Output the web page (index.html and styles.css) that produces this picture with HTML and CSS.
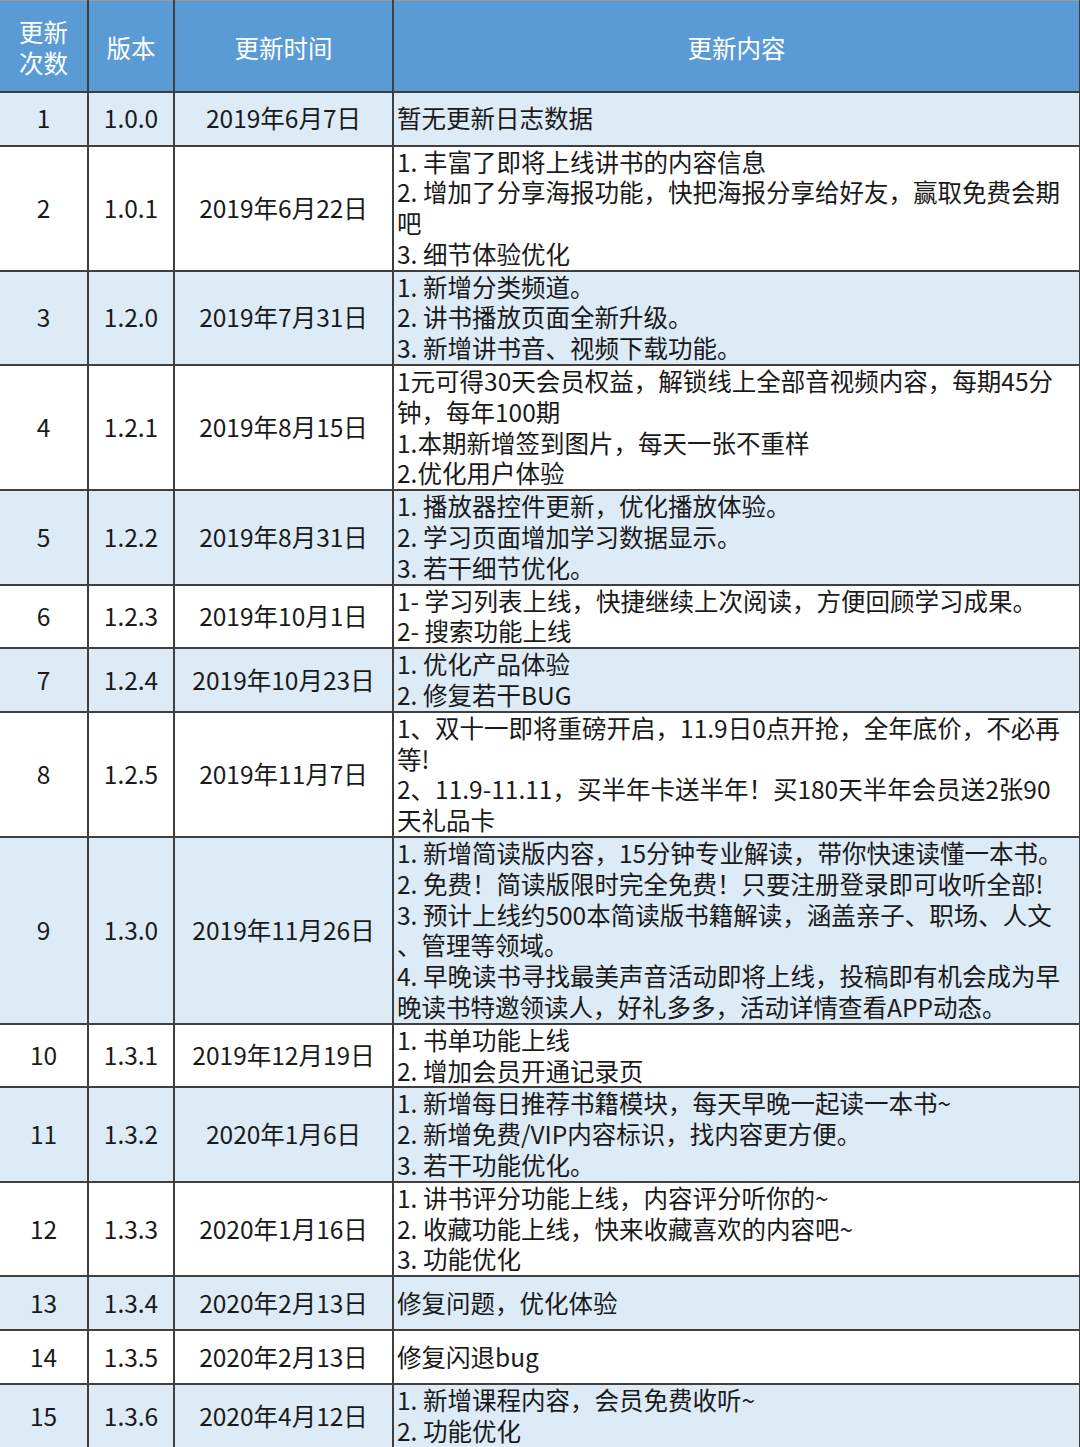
FILE: index.html
```html
<!DOCTYPE html>
<html lang="zh-CN">
<head>
<meta charset="utf-8">
<title>更新日志</title>
<link rel="stylesheet" href="styles.css">
</head>
<body>
<table class="log">
  <colgroup>
    <col class="c-no">
    <col class="c-ver">
    <col class="c-date">
    <col class="c-text">
  </colgroup>
  <thead>
    <tr class="head">
      <th>更新<br>次数</th>
      <th>版本</th>
      <th>更新时间</th>
      <th>更新内容</th>
    </tr>
  </thead>
  <tbody>
    <tr class="alt single">
      <td>1</td><td>1.0.0</td><td>2019年6月7日</td>
      <td class="text">暂无更新日志数据</td>
    </tr>
    <tr>
      <td>2</td><td>1.0.1</td><td>2019年6月22日</td>
      <td class="text">1. 丰富了即将上线讲书的内容信息<br>2. 增加了分享海报功能，快把海报分享给好友，赢取免费会期<br>吧<br>3. 细节体验优化</td>
    </tr>
    <tr class="alt">
      <td>3</td><td>1.2.0</td><td>2019年7月31日</td>
      <td class="text">1. 新增分类频道。<br>2. 讲书播放页面全新升级。<br>3. 新增讲书音、视频下载功能。</td>
    </tr>
    <tr>
      <td>4</td><td>1.2.1</td><td>2019年8月15日</td>
      <td class="text">1元可得30天会员权益，解锁线上全部音视频内容，每期45分<br>钟，每年100期<br>1.本期新增签到图片，每天一张不重样<br>2.优化用户体验</td>
    </tr>
    <tr class="alt">
      <td>5</td><td>1.2.2</td><td>2019年8月31日</td>
      <td class="text">1. 播放器控件更新，优化播放体验。<br>2. 学习页面增加学习数据显示。<br>3. 若干细节优化。</td>
    </tr>
    <tr>
      <td>6</td><td>1.2.3</td><td>2019年10月1日</td>
      <td class="text">1- 学习列表上线，快捷继续上次阅读，方便回顾学习成果。<br>2- 搜索功能上线</td>
    </tr>
    <tr class="alt">
      <td>7</td><td>1.2.4</td><td>2019年10月23日</td>
      <td class="text">1. 优化产品体验<br>2. 修复若干BUG</td>
    </tr>
    <tr>
      <td>8</td><td>1.2.5</td><td>2019年11月7日</td>
      <td class="text">1、双十一即将重磅开启，11.9日0点开抢，全年底价，不必再<br>等!<br>2、11.9-11.11，买半年卡送半年！买180天半年会员送2张90<br>天礼品卡</td>
    </tr>
    <tr class="alt">
      <td>9</td><td>1.3.0</td><td>2019年11月26日</td>
      <td class="text">1. 新增简读版内容，15分钟专业解读，带你快速读懂一本书。<br>2. 免费！简读版限时完全免费！只要注册登录即可收听全部!<br>3. 预计上线约500本简读版书籍解读，涵盖亲子、职场、人文<br>、管理等领域。<br>4. 早晚读书寻找最美声音活动即将上线，投稿即有机会成为早<br>晚读书特邀领读人，好礼多多，活动详情查看APP动态。</td>
    </tr>
    <tr>
      <td>10</td><td>1.3.1</td><td>2019年12月19日</td>
      <td class="text">1. 书单功能上线<br>2. 增加会员开通记录页</td>
    </tr>
    <tr class="alt">
      <td>11</td><td>1.3.2</td><td>2020年1月6日</td>
      <td class="text">1. 新增每日推荐书籍模块，每天早晚一起读一本书~<br>2. 新增免费/VIP内容标识，找内容更方便。<br>3. 若干功能优化。</td>
    </tr>
    <tr>
      <td>12</td><td>1.3.3</td><td>2020年1月16日</td>
      <td class="text">1. 讲书评分功能上线，内容评分听你的~<br>2. 收藏功能上线，快来收藏喜欢的内容吧~<br>3. 功能优化</td>
    </tr>
    <tr class="alt single">
      <td>13</td><td>1.3.4</td><td>2020年2月13日</td>
      <td class="text">修复问题，优化体验</td>
    </tr>
    <tr class="single">
      <td>14</td><td>1.3.5</td><td>2020年2月13日</td>
      <td class="text">修复闪退bug</td>
    </tr>
    <tr class="alt">
      <td>15</td><td>1.3.6</td><td>2020年4月12日</td>
      <td class="text">1. 新增课程内容，会员免费收听~<br>2. 功能优化</td>
    </tr>
  </tbody>
</table>
</body>
</html>
```

FILE: styles.css
```css
html, body {
  margin: 0;
  padding: 0;
  background: #ffffff;
}

.log {
  width: 1080px;
  border-collapse: collapse;
  table-layout: fixed;
  font-family: "Noto Sans CJK SC", "Noto Sans", sans-serif;
  font-size: 24.5px;
  line-height: 30.8px;
  color: #1a1a1a;
}

.c-no { width: 88px; }
.c-ver { width: 86px; }
.c-date { width: 219px; }
.c-text { width: 687px; }

.log th,
.log td {
  border: 2px solid #3f3f3f;
  padding: 0;
  text-align: center;
  vertical-align: middle;
  white-space: nowrap;
}

.log th:first-child,
.log td:first-child {
  border-left: none;
}

.log thead th {
  border-top: 1px solid #9a9a9a;
  padding-top: 5px;
}

.head {
  height: 91px;
  background: #5b9bd5;
}

.head th {
  color: #ffffff;
  font-weight: normal;
}

.alt {
  background: #ddebf7;
}

.single {
  height: 54px;
}

.log td.text {
  text-align: left;
  padding-left: 3px;
}
```
